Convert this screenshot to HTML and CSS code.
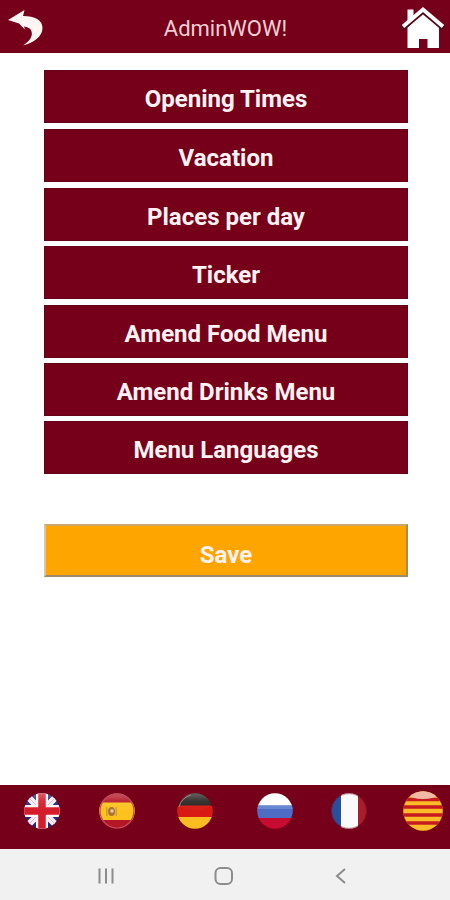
FILE: index.html
```html
<!DOCTYPE html>
<html lang="en">
  <head>
    <meta charset="utf-8">
    <title>AdminWOW!</title>
    <link rel="stylesheet" href="styles.css">
  </head>

  <body>
    <div class="header">
      <a class="header-back" href="#">
        <svg width="36" height="38" viewBox="0 0 36 38">
          <path d="M0 11 L16.500 1 L15 7 C27 7 34.500 11 34.500 19 C34.500 27 26 34 15 36.500 C22 32 25 27 23.500 22.500 C22.500 19 19.500 18 16 17.500 L17 20.500 L11 14.500 Z" fill="#fff6f3"/>
        </svg>
      </a>
      <h1 class="header-title">AdminWOW!</h1>
      <a class="header-home" href="#">
        <svg width="44" height="42" viewBox="0 0 44 42">
          <path d="M22 6 L38 20.500 V41 H26.500 V32 H18 V41 H6.500 V20.500 Z" fill="#fff"/>
          <path d="M1 21.500 L22 4 L43 21.500" fill="none" stroke="#4f0a16" stroke-width="5.500"/>
          <path d="M6.500 2.500 H12.500 V8.500 L6.500 14 Z" fill="#fff"/>
          <path d="M2 19.500 L22 2.500 L42 19.500" fill="none" stroke="#fff" stroke-width="3.800"/>
        </svg>
      </a>
    </div>

    <div class="content">
      <div class="menu">
        <button class="menu-item">Opening Times</button>
        <button class="menu-item">Vacation</button>
        <button class="menu-item">Places per day</button>
        <button class="menu-item">Ticker</button>
        <button class="menu-item">Amend Food Menu</button>
        <button class="menu-item">Amend Drinks Menu</button>
        <button class="menu-item">Menu Languages</button>
      </div>
      <button class="save">Save</button>
    </div>

    <div class="languages">
      <svg class="flag" viewBox="0 0 40 40">
        <defs>
          <clipPath id="round"><circle cx="20" cy="20" r="17.800"/></clipPath>
          <linearGradient id="shine" x1="0" y1="0" x2="0" y2="1">
            <stop offset="0" stop-color="#fff" stop-opacity="0.35"/>
            <stop offset="0.5" stop-color="#fff" stop-opacity="0.08"/>
            <stop offset="1" stop-color="#fff" stop-opacity="0"/>
          </linearGradient>
        </defs>
        <g clip-path="url(#round)">
          <path d="M0 0 H40 V40 H0 Z" fill="#252879"/>
          <path d="M3 3 L37 37 M37 3 L3 37" stroke="#f5edf5" stroke-width="6.500"/>
          <path d="M3 3 L37 37 M37 3 L3 37" stroke="#e9b4bf" stroke-width="1"/>
          <path d="M20 0 V40 M0 20 H40" stroke="#fff5f5" stroke-width="12"/>
          <path d="M20 0 V40 M0 20 H40" stroke="#d51c2b" stroke-width="7.500"/>
          <ellipse cx="20" cy="10" rx="17" ry="10" fill="url(#shine)"/>
        </g>
      </svg>
      <svg class="flag" viewBox="0 0 40 40">
        <g clip-path="url(#round)">
          <path d="M0 0 H40 V40 H0 Z" fill="#b51626"/>
          <path d="M0 11.500 H40 V29 H0 Z" fill="#fdc21d"/>
          <path d="M9 16 H10.500 V25 H9 Z M18.500 16 H20 V25 H18.500 Z" fill="#d49a3a"/>
          <ellipse cx="14.500" cy="20.500" rx="3.500" ry="4.500" fill="#a8733a"/>
          <circle cx="15" cy="20" r="1.800" fill="#e8c79c"/>
          <ellipse cx="20" cy="10" rx="17" ry="10" fill="url(#shine)"/>
        </g>
        <circle cx="20" cy="20" r="17" fill="none" stroke="#c04a5a" stroke-width="1.200"/>
      </svg>
      <svg class="flag" viewBox="0 0 40 40">
        <g clip-path="url(#round)">
          <path d="M0 0 H40 V15 H0 Z" fill="#272321"/>
          <path d="M0 14.500 H40 V26 H0 Z" fill="#d91914"/>
          <path d="M0 26 H40 V40 H0 Z" fill="#fdbd20"/>
          <ellipse cx="20" cy="10" rx="17" ry="10" fill="url(#shine)"/>
        </g>
        <path d="M4 16 A17 17 0 0 1 16 4" fill="none" stroke="#a58380" stroke-width="1"/>
      </svg>
      <svg class="flag" viewBox="0 0 40 40">
        <g clip-path="url(#round)">
          <path d="M0 0 H40 V15 H0 Z" fill="#fff"/>
          <path d="M0 14.500 H40 V27 H0 Z" fill="#4f6cc4"/>
          <path d="M0 27 H40 V40 H0 Z" fill="#c60c30"/>
          <path d="M0 14.500 H40 V18 H0 Z" fill="#6687d3"/>
        </g>
      </svg>
      <svg class="flag" viewBox="0 0 40 40">
        <g clip-path="url(#round)">
          <path d="M0 0 H13 V40 H0 Z" fill="#28509d"/>
          <path d="M12 0 H29 V40 H12 Z" fill="#fafafa"/>
          <path d="M29 0 H40 V40 H29 Z" fill="#aa1d2d"/>
        </g>
        <circle cx="20" cy="20" r="17.300" fill="none" stroke="#76001a" stroke-opacity="0.4" stroke-width="1"/>
      </svg>
      <svg class="flag" viewBox="0 0 40 40">
        <clipPath id="round-large"><circle cx="20" cy="20" r="19.800"/></clipPath>
        <g clip-path="url(#round-large)">
          <path d="M0 0 H40 V40 H0 Z" fill="#fdbb27"/>
          <path d="M0 8.500 H40 M0 16 H40 M0 24 H40 M0 32 H40" stroke="#c51b20" stroke-width="3.500"/>
          <ellipse cx="20" cy="3.500" rx="14" ry="4.500" fill="#f3b9a7"/>
        </g>
      </svg>
    </div>

    <div class="navigation">
      <svg width="18" height="18" viewBox="0 0 18 18">
        <path d="M2.500 1.500 V16.500 M9 1.500 V16.500 M15.500 1.500 V16.500"/>
      </svg>
      <svg width="23" height="20" viewBox="0 0 23 20">
        <rect x="1.500" y="2" width="16.500" height="16" rx="5"/>
      </svg>
      <svg width="15" height="18" viewBox="0 0 15 18">
        <path d="M10 2 L2 9 L10 16"/>
      </svg>
    </div>
  </body>
</html>
```

FILE: styles.css
```css
* {
  margin: 0;
  padding: 0;
  box-sizing: border-box;
  font-family: Roboto, "Liberation Sans", sans-serif;
}

body {
  display: flex;
  flex-direction: column;
  height: 900px;
  background: #fff;
  overflow: hidden;
}

/* Header */
.header {
  display: flex;
  align-items: center;
  justify-content: space-between;
  height: 53px;
  padding: 2px 5px 0 8px;
  background: #76001a;
}
.header a {
  display: flex;
  width: 44px;
}
.header-title {
  padding: 1px 2px 0 0;
  font-size: 22px;
  font-weight: normal;
  color: #f3cfd3;
}
/* Header */

/* Content */
.content {
  flex: 1;
  padding: 17px 42px 0 44px;
}
.menu {
  display: grid;
  grid-template-rows: 59px 59px 58px 59px 58px 58px 53px;
}
.menu-item, .save {
  display: block;
  width: 100%;
  height: 53px;
  padding-top: 5px;
  font-size: 24px;
  font-weight: bold;
  color: #fff2f3;
}
.menu-item {
  background: #76001a;
  border: 1px solid #650016;
}
.save {
  margin-top: 50px;
  padding-top: 8px;
  background: #ffa500;
  border: 2px solid;
  border-color: #c9a66a #a08a68 #a08a68 #dfc79c;
}
/* Content */

/* Languages */
.languages {
  display: grid;
  grid-template-columns: 75px 78px 80px 74px 74px 40px;
  height: 64px;
  padding: 6px 0 0 22px;
  background: #76001a;
}
.flag {
  width: 40px;
  height: 40px;
}
/* Languages */

/* Navigation */
.navigation {
  display: flex;
  align-items: center;
  justify-content: space-between;
  height: 51px;
  padding: 3px 100px 0 97px;
  background: #f1f1f1;
}
.navigation svg {
  fill: none;
  stroke: #8c8c8c;
  stroke-width: 2;
}
/* Navigation */
```
